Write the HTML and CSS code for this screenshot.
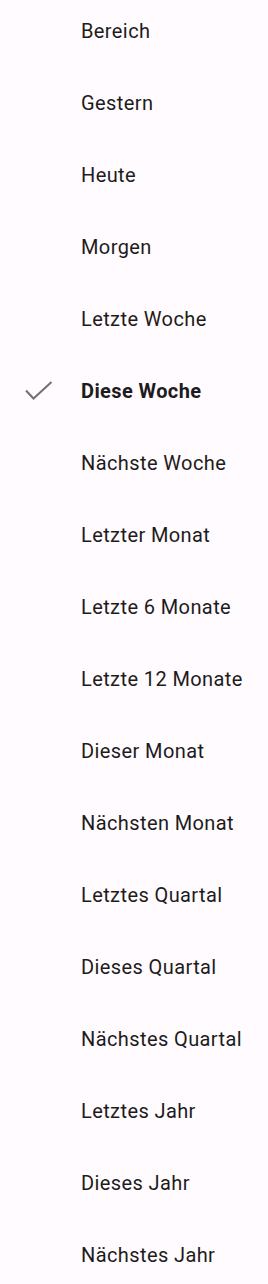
FILE: index.html
```html
<!doctype html>
<html lang="de">
<head>
  <meta charset="utf-8">
  <title>Zeitraum</title>
  <meta name="viewport" content="width=device-width, initial-scale=1">
  <link rel="stylesheet" href="styles.css">
</head>
<body>
<ul class="menu">
  <li class="menu-item"><span class="check"></span><span class="label">Bereich</span></li>
  <li class="menu-item"><span class="check"></span><span class="label">Gestern</span></li>
  <li class="menu-item"><span class="check"></span><span class="label">Heute</span></li>
  <li class="menu-item"><span class="check"></span><span class="label">Morgen</span></li>
  <li class="menu-item"><span class="check"></span><span class="label">Letzte Woche</span></li>
  <li class="menu-item selected">
    <span class="check">
      <svg viewBox="0 0 28 20" width="28" height="20"><path d="M1 9.5l7.5 8L26.5 1" fill="none" stroke="currentColor" stroke-width="2"/></svg>
    </span>
    <span class="label">Diese Woche</span>
  </li>
  <li class="menu-item"><span class="check"></span><span class="label">Nächste Woche</span></li>
  <li class="menu-item"><span class="check"></span><span class="label">Letzter Monat</span></li>
  <li class="menu-item"><span class="check"></span><span class="label">Letzte 6 Monate</span></li>
  <li class="menu-item"><span class="check"></span><span class="label">Letzte 12 Monate</span></li>
  <li class="menu-item"><span class="check"></span><span class="label">Dieser Monat</span></li>
  <li class="menu-item"><span class="check"></span><span class="label">Nächsten Monat</span></li>
  <li class="menu-item"><span class="check"></span><span class="label">Letztes Quartal</span></li>
  <li class="menu-item"><span class="check"></span><span class="label">Dieses Quartal</span></li>
  <li class="menu-item"><span class="check"></span><span class="label">Nächstes Quartal</span></li>
  <li class="menu-item"><span class="check"></span><span class="label">Letztes Jahr</span></li>
  <li class="menu-item"><span class="check"></span><span class="label">Dieses Jahr</span></li>
  <li class="menu-item"><span class="check"></span><span class="label">Nächstes Jahr</span></li>
</ul>
</body>
</html>
```

FILE: styles.css
```css
*{
  padding:0;
  margin:0;
  box-sizing:border-box;
}
html,body{
  background:#fffbfe;
}
body{
  font-family: Roboto, "Liberation Sans", sans-serif;
  color:#1d1b20;
  overflow:hidden;
}
.menu{
  list-style:none;
  margin-top:-5px;
}
.menu-item{
  height:72px;
  display:flex;
  align-items:center;
}
.check{
  width:81px;
  padding-left:25px;
  display:flex;
  align-items:center;
  color:#707070;
}
.label{
  font-size:20px;
  letter-spacing:0.4px;
}
.selected .label{
  font-weight:bold;
}
```
